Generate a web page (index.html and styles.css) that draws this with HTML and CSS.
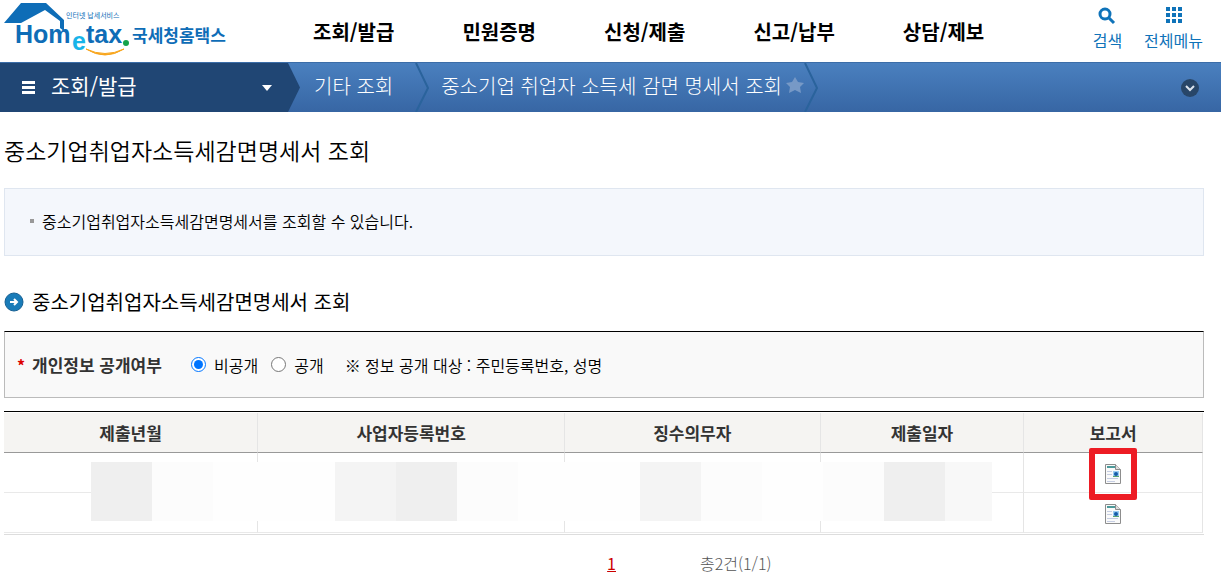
FILE: index.html
```html
<!DOCTYPE html>
<html lang="ko">
<head>
  <meta charset="UTF-8" />
  <meta name="viewport" content="width=device-width, initial-scale=1.0"/>
  <title>국세청 홈택스</title>
  <link rel="stylesheet" href="styles.css">
</head>
<body>

  <header class="header">
    <a class="logo" href="#" aria-label="국세청 홈택스">
      <svg width="240" height="60" viewBox="0 0 240 60">
        <path d="M21 3h25l18 17v11l-4-3v-7L45 10 21 23H4z" fill="#0e6db7"/>
        <text class="logo-small" x="66" y="18">인터넷 납세서비스</text>
        <text class="logo-name" x="15" y="43">Hom</text>
        <text class="logo-name logo-e" x="72" y="50">e</text>
        <text class="logo-name" x="86" y="43">tax</text>
        <circle cx="126" cy="43" r="3" fill="#16a34a"/>
        <path d="M86 49q19 12 38 0q-19 9-38 0z" fill="#f8a51b" stroke="#f8a51b"/>
        <text class="logo-kr" x="132" y="42">국세청홈택스</text>
      </svg>
    </a>
    <nav class="gnb">
      <a href="#">조회/발급</a>
      <a href="#">민원증명</a>
      <a href="#">신청/제출</a>
      <a href="#">신고/납부</a>
      <a href="#">상담/제보</a>
    </nav>
    <div class="util">
      <button>
        <svg width="20" height="20" viewBox="0 0 20 20" fill="none" stroke="#0f73b9">
          <circle cx="8" cy="8" r="5" stroke-width="3"/>
          <path d="M11 11l6 6" stroke-width="3"/>
        </svg>
        검색
      </button>
      <button>
        <svg width="20" height="20" viewBox="0 0 20 20" fill="#0f73b9">
          <path d="M2 1h4v4H2zM8 1h4v4H8zM14 1h4v4h-4zM2 7h4v4H2zM8 7h4v4H8zM14 7h4v4h-4zM2 13h4v4H2zM8 13h4v4H8zM14 13h4v4h-4z"/>
        </svg>
        전체메뉴
      </button>
    </div>
  </header>

  <div class="path">
    <button class="path-menu">
      <svg width="14" height="14" viewBox="0 0 14 14" fill="#fff">
        <path d="M0 0h13v3H0zM0 5h13v3H0zM0 10h13v3H0z"/>
      </svg>
      <span>조회/발급</span>
      <svg class="caret" width="10" height="6" viewBox="0 0 10 6" fill="#fff">
        <path d="M0 0h10L5 6z"/>
      </svg>
    </button>
    <a class="crumb" href="#">기타 조회</a>
    <svg class="sep" width="14" height="49" viewBox="0 0 14 49"><path d="M1 0l12 25L1 49"/></svg>
    <a class="crumb crumb-last" href="#">중소기업 취업자 소득세 감면 명세서 조회</a>
    <button class="star" aria-label="즐겨찾기">
      <svg width="18" height="18" viewBox="0 0 18 18" fill="#7799c6">
        <path d="M9 0l3 5 6 1-4 4 1 6-6-3-6 3 1-6-4-4 6-1z"/>
      </svg>
    </button>
    <svg class="sep" width="14" height="49" viewBox="0 0 14 49"><path d="M1 0l12 25L1 49"/></svg>
    <button class="path-toggle" aria-label="펼치기">
      <svg width="20" height="20" viewBox="0 0 20 20" fill="none">
        <circle cx="10" cy="10" r="9" fill="#284668"/>
        <path d="M6 8l4 4 4-4" stroke="#dce4ee" stroke-width="2"/>
      </svg>
    </button>
  </div>

  <main class="content">
    <h1>중소기업취업자소득세감면명세서 조회</h1>

    <ul class="info">
      <li>중소기업취업자소득세감면명세서를 조회할 수 있습니다.</li>
    </ul>

    <h2>
      <svg width="20" height="20" viewBox="0 0 20 20" fill="none">
        <circle cx="10" cy="10" r="9" fill="#197bb8" stroke="#176093"/>
        <path d="M6 10h7M10 7l3 3-3 3" stroke="#fff" stroke-width="2"/>
      </svg>
      중소기업취업자소득세감면명세서 조회
    </h2>

    <form class="filter">
      <span class="required">*</span>
      <strong>개인정보 공개여부</strong>
      <input type="radio" name="open" id="open-n" checked>
      <label for="open-n">비공개</label>
      <input type="radio" name="open" id="open-y">
      <label for="open-y">공개</label>
      <span class="note">※ 정보 공개 대상 : 주민등록번호, 성명</span>
    </form>

    <div class="grid">
      <table>
        <colgroup>
          <col class="col-month">
          <col class="col-biz">
          <col class="col-payer">
          <col class="col-date">
          <col class="col-report">
        </colgroup>
        <thead>
          <tr>
            <th>제출년월</th>
            <th>사업자등록번호</th>
            <th>징수의무자</th>
            <th>제출일자</th>
            <th>보고서</th>
          </tr>
        </thead>
        <tbody>
          <tr>
            <td></td><td></td><td></td><td></td>
            <td>
              <button class="report marked" aria-label="보고서 보기">
                <svg width="18" height="20" viewBox="0 0 18 20">
                  <path d="M1.500 .5h10l5 5v14h-15z" fill="#fafafa" stroke="#8d8d8d"/>
                  <path d="M11.500 .5v5h5" fill="#ddd" stroke="#8d8d8d"/>
                  <path d="M3 3h8" stroke="#4c9a9a" stroke-width="2"/>
                  <path d="M3 7.500h5M3 10.500h5M3 14.500h11M3 17.500h8" stroke="#c5cde2"/>
                  <path d="M9 7h6v6H9z" fill="#9ccdf2"/>
                  <circle cx="12" cy="10" r="2" fill="#165ca8"/>
                  <path d="M9 12h6v1H9z" fill="#5aa36d"/>
                </svg>
              </button>
            </td>
          </tr>
          <tr>
            <td></td><td></td><td></td><td></td>
            <td>
              <button class="report" aria-label="보고서 보기">
                <svg width="18" height="20" viewBox="0 0 18 20">
                  <path d="M1.500 .5h10l5 5v14h-15z" fill="#fafafa" stroke="#8d8d8d"/>
                  <path d="M11.500 .5v5h5" fill="#ddd" stroke="#8d8d8d"/>
                  <path d="M3 3h8" stroke="#4c9a9a" stroke-width="2"/>
                  <path d="M3 7.500h5M3 10.500h5M3 14.500h11M3 17.500h8" stroke="#c5cde2"/>
                  <path d="M9 7h6v6H9z" fill="#9ccdf2"/>
                  <circle cx="12" cy="10" r="2" fill="#165ca8"/>
                  <path d="M9 12h6v1H9z" fill="#5aa36d"/>
                </svg>
              </button>
            </td>
          </tr>
        </tbody>
      </table>
      <!-- blocks hiding the personal data -->
      <div class="mosaic">
        <i class="dark"></i><i class="light"></i><i></i><i></i>
        <i class="mid"></i><i class="dark"></i><i class="light"></i><i></i><i></i>
        <i class="mid"></i><i class="light"></i><i></i><i class="light"></i>
        <i class="dark"></i><i class="soft"></i>
      </div>
    </div>

    <div class="paging">
      <a href="#">1</a>
      <span>총2건(1/1)</span>
    </div>
  </main>

</body>
</html>
```
FILE: styles.css
```css
* {
  box-sizing: border-box;
}

body {
  margin: 0;
  font-family: "Noto Sans CJK KR", sans-serif;
  font-size: 16px;
  line-height: 20px;
  color: #000;
  background: #fff;
}

a {
  color: inherit;
  text-decoration: none;
}

button {
  padding: 0;
  border: none;
  background: none;
  font: inherit;
  color: inherit;
  cursor: pointer;
}

svg {
  display: block;
  flex-shrink: 0;
}

/* header */
.header {
  display: flex;
  height: 62px;
}

.logo-small {
  font-size: 7px;
  fill: #0e6db7;
}

.logo-name {
  font-family: "Liberation Sans", sans-serif;
  font-size: 25px;
  font-weight: bold;
  fill: #0e6db7;
}

.logo-e {
  fill: #18b4e9;
}

.logo-kr {
  font-size: 17px;
  font-weight: bold;
  fill: #0e6db7;
}

.gnb {
  display: flex;
  align-items: center;
  gap: 68px;
  margin-left: 73px;
  padding-top: 2px;
  font-size: 20px;
  font-weight: bold;
  white-space: nowrap;
}

.util {
  display: flex;
  gap: 22px;
  margin-left: auto;
  padding: 6px 18px 0 0;
  color: #0f73b9;
}

.util button {
  display: flex;
  flex-direction: column;
  align-items: center;
  gap: 4px;
}

/* breadcrumb bar */
.path {
  display: flex;
  align-items: center;
  height: 50px;
  font-size: 20px;
  font-weight: 300;
  color: #fff;
  white-space: nowrap;
  background: linear-gradient(#4a80bf, #3766a4);
  border-top: 1px solid #3b6da8;
}

.path-menu {
  display: flex;
  align-items: center;
  width: 300px;
  height: 100%;
  padding: 0 28px 0 22px;
  font-size: 21px;
  font-weight: 400;
  background: #204674;
  clip-path: polygon(0 0, 288px 0, 100% 50%, 288px 100%, 0 100%);
}

.path-menu span {
  margin-left: 15px;
  padding-bottom: 6px;
}

.caret {
  margin-left: auto;
}

.crumb {
  margin: 0 22px 0 14px;
  padding-bottom: 4px;
}

.crumb-last {
  margin: 0 4px 0 12px;
}

.star {
  padding-bottom: 4px;
}

.sep {
  fill: none;
  stroke: #2a639c;
  stroke-width: 2;
}

.path-toggle {
  margin: 0 21px 0 auto;
}

/* content */
.content {
  padding: 0 17px 0 4px;
}

h1 {
  margin: 22px 0;
  font-size: 23px;
  font-weight: 350;
  line-height: 32px;
}

.info {
  margin: 0;
  padding: 22px 25px 24px;
  font-weight: 350;
  list-style: none;
  background: #f4f7fc;
  border: 1px solid #dfe6f0;
}

.info li {
  display: flex;
  align-items: center;
  gap: 8px;
}

.info li::before {
  content: "";
  width: 4px;
  height: 4px;
  background: #999;
}

h2 {
  display: flex;
  align-items: center;
  gap: 8px;
  margin: 36px 0 19px;
  font-size: 20px;
  font-weight: 400;
  line-height: 20px;
}

.filter {
  display: flex;
  align-items: center;
  height: 67px;
  padding-left: 12px;
  font-weight: 350;
  background: #f9f9f9;
  border: 1px solid #bbb;
  border-top-color: #000;
}

.required {
  width: 15px;
  font-weight: bold;
  color: #d00;
}

.filter strong {
  width: 159px;
  font-size: 17px;
  color: #333;
}

.filter input {
  width: 15px;
  height: 15px;
  margin: 0 8px 0 0;
}

.filter label {
  margin-right: 13px;
}

.note {
  margin-left: 8px;
}

/* result table */
.grid {
  position: relative;
  margin-top: 13px;
  padding: 1px 1px 1px 0;
  border-top: 1px solid #000;
  border-bottom: 1px solid #ddd;
}

table {
  width: 100%;
  table-layout: fixed;
  border-collapse: separate;
  border-spacing: 0;
}

.col-month { width: 21.2%; }
.col-biz { width: 25.6%; }
.col-payer { width: 21.3%; }
.col-date { width: 17%; }
.col-report { width: 14.9%; }

th,
td {
  height: 40px;
  padding: 0;
  text-align: center;
  border-right: 1px solid #e5e5e5;
  border-bottom: 1px solid #e9e9e9;
}

th {
  font-size: 17px;
  color: #333;
  background: #f5f4f2;
  border-bottom-color: #999;
}

.report {
  position: relative;
  vertical-align: middle;
}

.marked::after {
  content: "";
  position: absolute;
  inset: -16px -15px;
  border: 6px solid #ed1c24;
  border-radius: 2px;
}

.mosaic {
  position: absolute;
  top: 50px;
  left: 7.25%;
  display: grid;
  grid-template-columns: repeat(14, 61fr) 47fr;
  width: 75.1%;
  height: 59px;
}

.mosaic i { background: #fefefe; }
.mosaic .dark { background: #efefef; }
.mosaic .mid { background: #f4f4f4; }
.mosaic .soft { background: #f8f8f8; }
.mosaic .light { background: #fcfcfc; }

.paging {
  display: grid;
  grid-template-columns: 51% 1fr;
  align-items: center;
  margin-top: 18px;
}

.paging a {
  justify-self: end;
  color: #c00;
  text-decoration: underline;
}

.paging span {
  margin-left: 84px;
  font-weight: 300;
  color: #555;
}
```
